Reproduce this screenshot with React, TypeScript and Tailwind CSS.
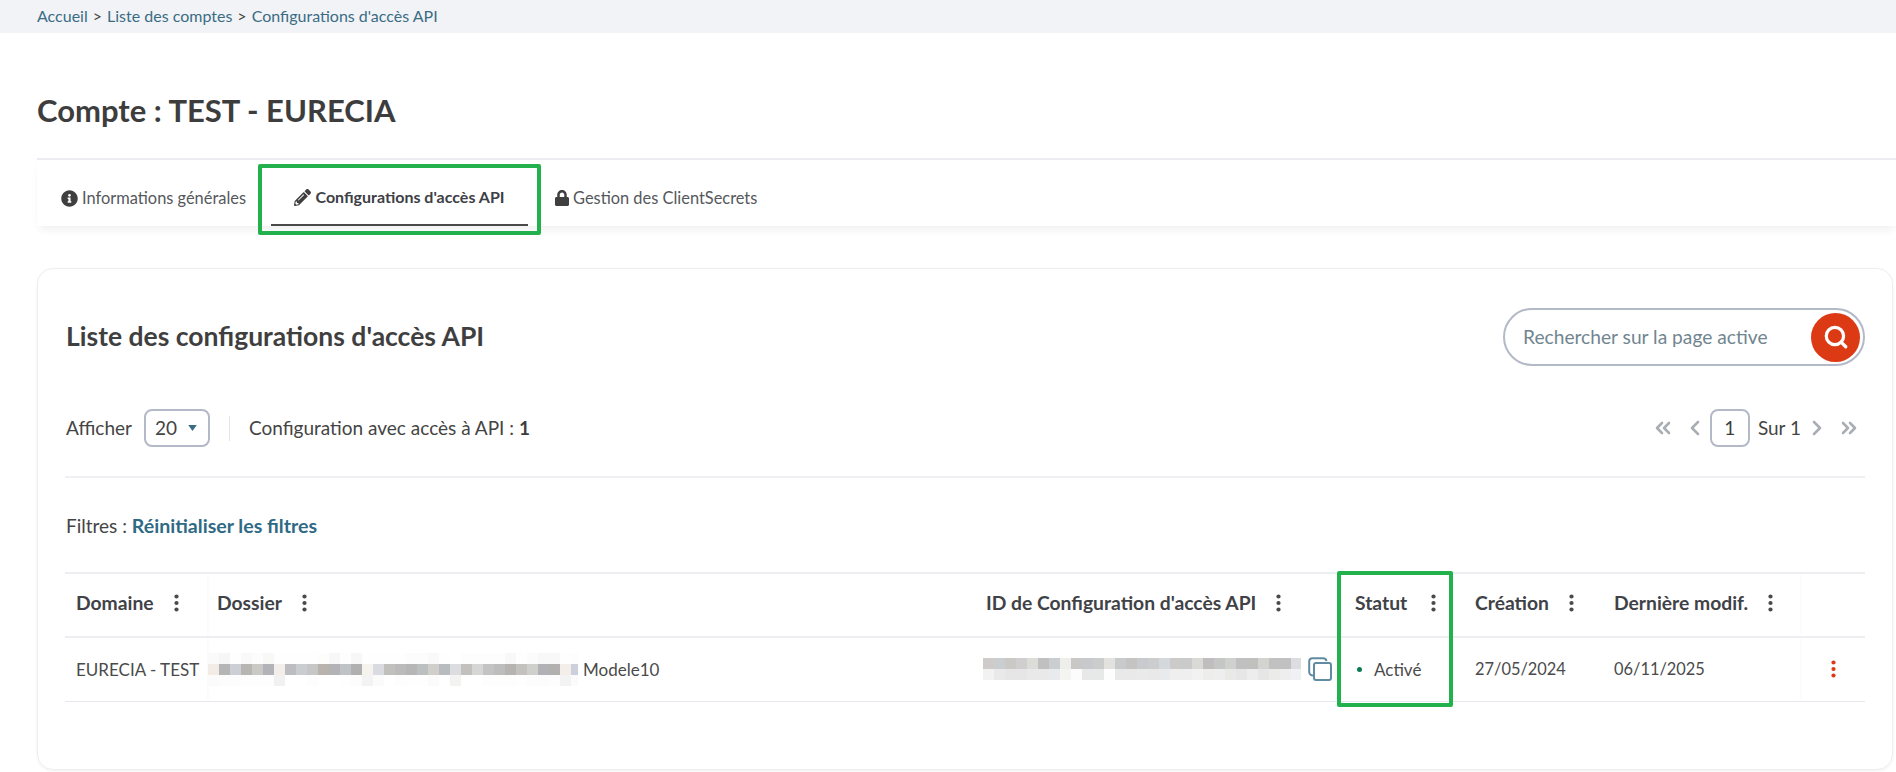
import { ChevronLeft, ChevronRight, ChevronsLeft, ChevronsRight, Search } from 'lucide-react';
import { FaInfoCircle, FaLock, FaPencilAlt } from 'react-icons/fa';

const mosaicTop = [
  '#fafafa', '#f6f6f6', '#fefefe', '#f9f9f9', '#fbfcfb', '#f8f8f6', '#fefefe', '#fefefe', '#fefefe', '#fefefe', '#fdfdfb', '#f7f7f7', '#fefefe', '#f7f7f7', '#fefefe', '#fefefe', '#fefefe',
  '#fefefe', '#fcfcfc', '#fcfcfc', '#f9f9f9', '#fefefe', '#ffffff', '#fdfdfd', '#fdfdfd', '#fdfdfd', '#fdfdfd', '#f8f8f8', '#fefefe', '#fbfbfb', '#f8f8f8', '#f8f8f8', '#fefefe', '#fdfdfd',
];
const mosaicMiddle = [
  '#f3ece6', '#b5b5b5', '#ccd0d6', '#b8b6b3', '#cbc9c5', '#b2b3b9', '#f3eee9', '#bcbdc0', '#c9cdd0', '#c6c6c6', '#b9b3ae', '#b3b2b5', '#bfc3c6', '#b0b0b0', '#f6f3ef', '#d9dbe0', '#c2c0bc',
  '#bbbbbb', '#b6b6b6', '#bcbfc0', '#d0cfca', '#b9bcbe', '#dcdde1', '#c2c1be', '#d6d6d6', '#c3c3c3', '#bdbdbe', '#b5b4b0', '#c3c2bf', '#cfcfcc', '#b2b1b5', '#b2b1b0', '#f3eee9', '#ccd0db',
];
const mosaicBottom = [
  '#fbfbfb', '#fcfcfc', '#fcfcfc', '#fdfdfd', '#fdfdfd', '#fdfdfd', '#f1f1f1', '#ffffff', '#ffffff', '#fdfdfd', '#ffffff', '#ffffff', '#fefefe', '#fcfcfc', '#f3f3f3', '#fbfbfb', '#ffffff',
  '#fdfdfd', '#fefefe', '#fefefe', '#fbfbfb', '#ffffff', '#f3f4f1', '#ffffff', '#ffffff', '#fdfdfd', '#fdfdfd', '#fdfdfd', '#fefefe', '#fcfcfc', '#fcfcfc', '#fdfdfd', '#f3f3f3', '#fbfbfb',
];
const idTop = [
  '#cfcbca', '#cbced1', '#cbc9c6', '#cfcfcf', '#dcdcd9', '#c0c0c0', '#cbced1', '#eeeeeb', '#cac8c6', '#c8c9cc', '#cbcdcd', '#e3e2df', '#c9cacb', '#c6c4c2', '#c9cacd',
  '#cdcdcd', '#d3d8dc', '#cdcbc9', '#cacaca', '#d9d9d6', '#bfbdbd', '#c5c7c7', '#d0d0cf', '#c0c0c0', '#c0c0bf', '#d3d3d0', '#c1c1c1', '#c1c1c1', '#dcdde0',
];
const idBottom = [
  '#f2f2f2', '#e9e9e9', '#e6e6e6', '#e6e6e6', '#e9e9e9', '#e9e9e9', '#e8eaec', '#f4f4f2', '#fcfcfc', '#e8e8e8', '#e7e9e9', '#fdfdfd', '#e9e9e9', '#e9e9e9', '#eaeaea',
  '#e9e9e9', '#e8eaec', '#efefef', '#efefef', '#f2f2f2', '#ededeb', '#eeeeee', '#e9e9e7', '#e6e6e6', '#ededed', '#e6e6e6', '#ebebe9', '#eeeeee', '#f0f1f3',
];

function Mosaic({ rows, className }: { rows: string[][]; className: string }) {
  return (
    <div className={`flex flex-col shrink-0 overflow-hidden ${className}`}>
      {rows.map((row, i) => (
        <div key={i} className="flex">
          {row.map((color, j) => (
            <span key={j} className="w-[11px] h-[11px] shrink-0" style={{ backgroundColor: color }} />
          ))}
        </div>
      ))}
    </div>
  );
}

function Kebab({ className }: { className: string }) {
  return (
    <svg viewBox="0 0 5 18" className={`w-[5px] h-[18px] shrink-0 ${className}`} fill="currentColor">
      <circle cx="2.5" cy="2.5" r="2.1" />
      <circle cx="2.5" cy="9" r="2.1" />
      <circle cx="2.5" cy="15.5" r="2.1" />
    </svg>
  );
}

function HeadLabel({ label, gap = 'gap-[20px]' }: { label: string; gap?: string }) {
  return (
    <div className={`flex items-center pb-[4px] ${gap}`}>
      <span className="text-[19.3px] font-bold text-[#3f4247] whitespace-nowrap">{label}</span>
      <Kebab className="text-[#4a4a4a]" />
    </div>
  );
}

export default function App() {
  return (
    <div className="h-[772px] overflow-hidden bg-white text-[#444444] [font-family:Lato,sans-serif]">
      {/* Breadcrumb */}
      <div className="h-[33px] bg-[#f2f3f7] pl-[37px] flex items-center text-[16px] pb-[2px]">
        <span className="text-[#3a6c84]">Accueil</span>
        <span className="mx-[5px] text-[#444444]">&gt;</span>
        <span className="text-[#3a6c84]">Liste des comptes</span>
        <span className="mx-[5px] text-[#444444]">&gt;</span>
        <span className="text-[#3a6c84]">Configurations d'accès API</span>
      </div>

      <div className="pl-[37px]">
        <h1 className="mt-[59px] h-9 leading-9 text-[31px] font-bold text-[#3d3d3d]">Compte : TEST - EURECIA</h1>

        {/* Tabs */}
        <div className="mt-[30px] border-t-2 border-[#ebecf1] h-[68px] flex items-stretch shadow-[0_6px_8px_-2px_rgba(0,0,0,0.06)]">
          <div className="pl-6 pr-[25px] pt-[10px] flex items-center gap-1 text-[16.4px] text-[#55585c] whitespace-nowrap">
            <FaInfoCircle className="w-[17px] h-[17px] text-[#3f3f3f]" />
            <span>Informations générales</span>
          </div>
          <div className="relative w-[257px] pt-[10px] flex items-center justify-center gap-1 text-[16px] font-bold text-[#3d4046] border-b-2 border-[#4a4a4a] whitespace-nowrap">
            <FaPencilAlt className="w-[17px] h-[17px] text-[#3f3f3f]" />
            <span>Configurations d'accès API</span>
            <div className="absolute left-[-13px] top-[4px] w-[283px] h-[71px] border-4 border-[#22b14c] rounded-[2px]" />
          </div>
          <div className="pl-[26px] pt-[10px] flex items-center gap-[3px] text-[16.4px] text-[#55585c] whitespace-nowrap">
            <FaLock className="w-4 h-4 text-[#3f3f3f]" />
            <span>Gestion des ClientSecrets</span>
          </div>
        </div>

        {/* Card */}
        <div className="mt-[42px] mr-[3px] h-[502px] border border-[#eceef2] rounded-[16px] shadow-[0_1px_3px_rgba(0,0,0,0.06)] px-[27px] pt-[39px]">
          <div className="flex items-center justify-between">
            <h2 className="text-[26.5px] font-bold text-[#3f3f3f] pl-px">Liste des configurations d'accès API</h2>
            <div className="w-[362px] h-[58px] rounded-full border-2 border-[#b4b9c8] flex items-center justify-between pl-[18px] pr-[3px]">
              <span className="text-[19.2px] text-[#71858f]">Rechercher sur la page active</span>
              <div className="w-[49px] h-[49px] rounded-full bg-[#dc3a15] flex items-center justify-center">
                <Search className="w-[26px] h-[26px] text-white" strokeWidth={3} />
              </div>
            </div>
          </div>

          {/* Controls */}
          <div className="mt-[43px] h-[38px] flex items-center justify-between text-[19px] pl-px">
            <div className="flex items-center">
              <span>Afficher</span>
              <div className="ml-[12px] w-[66px] h-[38px] rounded-[8px] border-2 border-[#b4b9c8] flex items-center justify-between pl-[9px] pr-[11px]">
                <span>20</span>
                <svg viewBox="0 0 10 7" className="w-[9px] h-[6px] text-[#3a6c84]" fill="currentColor">
                  <path d="M0 0h10L5 7z" />
                </svg>
              </div>
              <div className="mx-[19px] w-px h-[25px] bg-[#e3e5ea]" />
              <span>Configuration avec accès à API : <b className="text-[#3d3d3d]">1</b></span>
            </div>
            <div className="flex items-center text-[#a9adb4]">
              <ChevronsLeft className="w-6 h-6 mr-2" strokeWidth={2.6} />
              <ChevronLeft className="w-6 h-6 mr-[3px]" strokeWidth={2.6} />
              <div className="w-10 h-[38px] rounded-[8px] border-2 border-[#b4b9c8] flex items-center justify-center text-[#3d3d3d]">1</div>
              <span className="ml-2 text-[#444444]">Sur 1</span>
              <ChevronRight className="w-6 h-6 ml-1" strokeWidth={2.6} />
              <ChevronsRight className="w-6 h-6 ml-2 mr-1" strokeWidth={2.6} />
            </div>
          </div>

          <div className="mt-[29px] border-t-2 border-[#eff0f4]" />

          <div className="mt-9 h-6 leading-6 text-[19px] pl-px">
            Filtres : <span className="font-bold text-[19.6px] text-[#2f6a84]">Réinitialiser les filtres</span>
          </div>

          {/* Table */}
          <table className="mt-[34px] w-[1800px] table-fixed border-collapse">
            <colgroup>
              <col className="w-[142px]" />
              <col className="w-[769px]" />
              <col className="w-[369px]" />
              <col className="w-[120px]" />
              <col className="w-[139px]" />
              <col className="w-[198px]" />
              <col className="w-[63px]" />
            </colgroup>
            <thead>
              <tr className="h-[64px] border-y-2 border-[#eceef2]">
                <th className="pl-[11px] shadow-[2px_0_3px_rgba(0,0,0,0.02)]"><HeadLabel label="Domaine" /></th>
                <th className="pl-[10px]"><HeadLabel label="Dossier" /></th>
                <th className="pl-[10px]"><HeadLabel label="ID de Configuration d'accès API" /></th>
                <th className="relative pl-[10px]">
                  <HeadLabel label="Statut" gap="gap-[24px]" />
                  <div className="absolute left-[-8px] top-[-3px] w-[116px] h-[136px] border-4 border-[#22b14c] rounded-[2px]" />
                </th>
                <th className="pl-[10px]"><HeadLabel label="Création" /></th>
                <th className="pl-[10px]"><HeadLabel label="Dernière modif." /></th>
                <th className="shadow-[-2px_0_3px_rgba(0,0,0,0.02)]" />
              </tr>
            </thead>
            <tbody>
              <tr className="h-[64px] border-b border-[#e6e8f0] text-[17px] text-[#4a4a4a]">
                <td className="pl-[11px] whitespace-nowrap shadow-[2px_0_3px_rgba(0,0,0,0.02)]">EURECIA - TEST</td>
                <td className="pl-px">
                  <div className="flex items-center gap-[5px]">
                    <Mosaic rows={[mosaicTop, mosaicMiddle, mosaicBottom]} className="w-[370px]" />
                    <span>Modele10</span>
                  </div>
                </td>
                <td className="pl-[7px]">
                  <div className="flex items-center gap-[7px]">
                    <Mosaic rows={[idTop, idBottom]} className="w-[318px]" />
                    <svg viewBox="0 0 24 24" className="w-6 h-6 text-[#5f8ca2]" fill="none" stroke="currentColor" strokeWidth="2">
                      <path d="M5 18.5C2.8 18.5 1.2 17.2 1.2 15V4.5C1.2 2.4 2.4 1.2 4.5 1.2H15c2 0 3.3 1 3.5 3" />
                      <rect x="6" y="6" width="17" height="17" rx="2" />
                    </svg>
                  </div>
                </td>
                <td className="pl-[12px]">
                  <div className="flex items-center gap-[12px]">
                    <span className="w-[5px] h-[5px] rounded-full bg-[#0b7a55]" />
                    <span>Activé</span>
                  </div>
                </td>
                <td className="pl-[10px] text-[16.4px]">27/05/2024</td>
                <td className="pl-[10px] text-[16.4px]">06/11/2025</td>
                <td className="shadow-[-2px_0_3px_rgba(0,0,0,0.02)]">
                  <div className="flex justify-center">
                    <Kebab className="text-[#dc3a15]" />
                  </div>
                </td>
              </tr>
            </tbody>
          </table>
        </div>
      </div>
    </div>
  );
}
